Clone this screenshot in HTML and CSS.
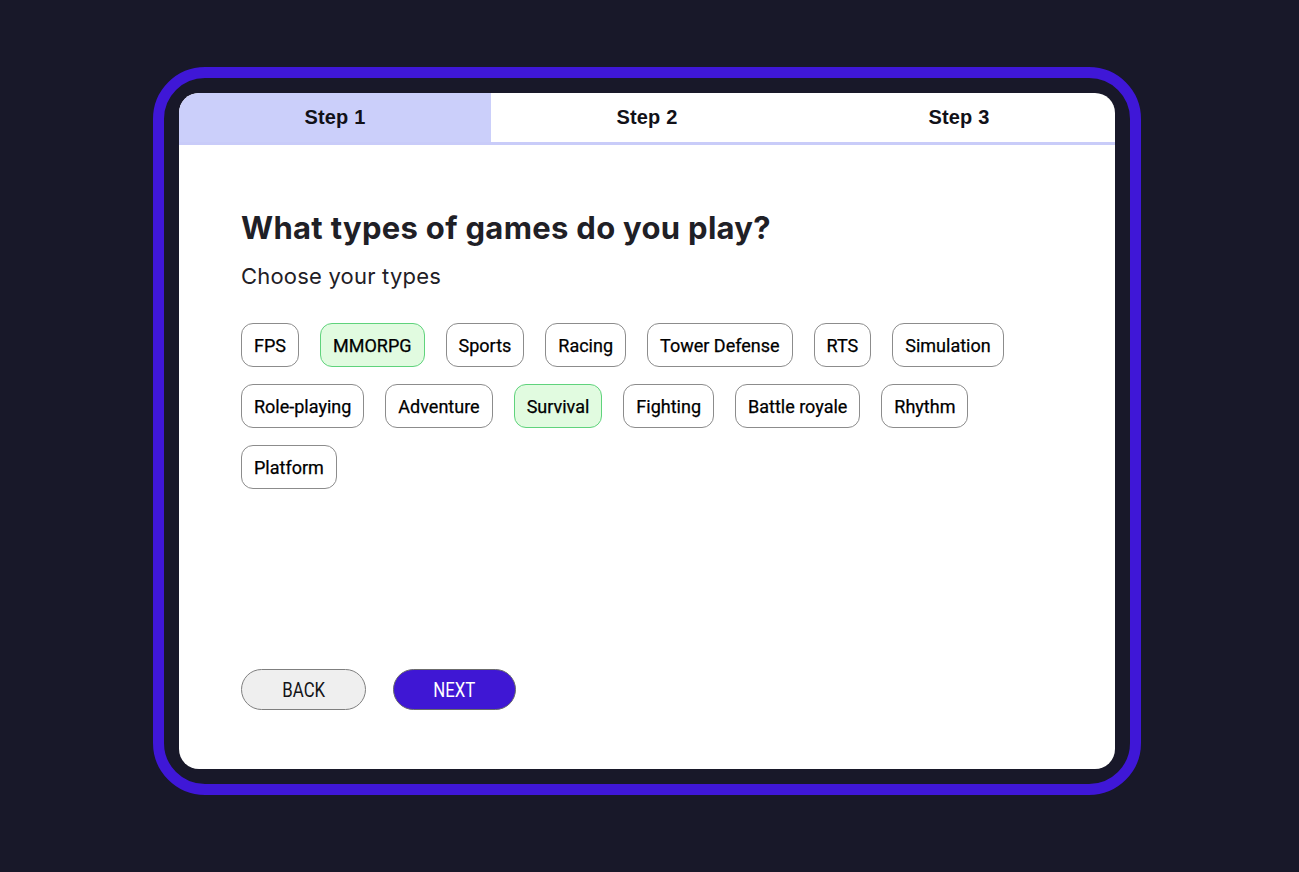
FILE: index.html
```html
<!DOCTYPE html>
<html lang="en">
<head>
<meta charset="utf-8">
<title>Game types</title>
<link rel="stylesheet" href="styles.css">
</head>
<body>
<div class="frame">
  <div class="card">
    <div class="tabs">
      <div class="tab active">Step 1</div>
      <div class="tab">Step 2</div>
      <div class="tab">Step 3</div>
    </div>
    <div class="content">
      <h1 class="title">What types of games do you play?</h1>
      <p class="subtitle">Choose your types</p>
      <div class="chips">
        <span class="chip">FPS</span>
        <span class="chip selected">MMORPG</span>
        <span class="chip">Sports</span>
        <span class="chip">Racing</span>
        <span class="chip">Tower Defense</span>
        <span class="chip">RTS</span>
        <span class="chip">Simulation</span>
        <span class="chip">Role-playing</span>
        <span class="chip">Adventure</span>
        <span class="chip selected">Survival</span>
        <span class="chip">Fighting</span>
        <span class="chip">Battle royale</span>
        <span class="chip">Rhythm</span>
        <span class="chip">Platform</span>
      </div>
      <div class="actions">
        <button class="btn back"><span class="btn-label">BACK</span></button>
        <button class="btn next"><span class="btn-label">NEXT</span></button>
      </div>
    </div>
  </div>
</div>
</body>
</html>
```
FILE: styles.css
```css
html, body {
  margin: 0;
  padding: 0;
  background: #181829;
}
body {
  height: 872px;
  overflow: hidden;
}
.frame {
  box-sizing: border-box;
  width: 988px;
  height: 728px;
  margin: 67px 0 0 153px;
  border: 11px solid #3f17d7;
  border-radius: 52px;
  padding: 15px;
  background: #181829;
}
.card {
  height: 100%;
  background: #ffffff;
  border-radius: 20px;
  overflow: hidden;
  display: flex;
  flex-direction: column;
}
.tabs {
  display: grid;
  grid-template-columns: repeat(3, 1fr);
  border-bottom: 3px solid #c9ccf9;
}
.tab {
  height: 49px;
  display: flex;
  align-items: center;
  justify-content: center;
  font-family: "Liberation Sans", Arial, sans-serif;
  font-weight: 700;
  font-size: 20px;
  letter-spacing: 0.2px;
  color: #111118;
}
.tab.active {
  background: #cbcffa;
}
.content {
  flex: 1;
  display: flex;
  flex-direction: column;
  padding: 65px 62px 59px;
}
.title {
  margin: 0;
  font-family: Inter, "Liberation Sans", sans-serif;
  font-weight: 700;
  font-size: 31px;
  line-height: 36px;
  letter-spacing: 0.3px;
  color: #1f2026;
}
.subtitle {
  margin: 16px 0 0;
  font-family: Inter, "Liberation Sans", sans-serif;
  font-size: 22px;
  line-height: 28px;
  letter-spacing: 0.2px;
  color: #1f2026;
}
.chips {
  display: flex;
  flex-wrap: wrap;
  gap: 17px 21px;
  margin-top: 33px;
}
.chip {
  box-sizing: border-box;
  height: 44px;
  display: inline-flex;
  align-items: center;
  padding: 0 12px;
  border: 1.5px solid #8c8c8c;
  border-radius: 12px;
  background: #ffffff;
  font-family: Roboto, "Liberation Sans", sans-serif;
  font-weight: 400;
  font-size: 18px;
  color: #000000;
  -webkit-text-stroke: 0.25px #000000;
}
.chip.selected {
  background: #e1fbe0;
  border-color: #5fd37c;
}
.actions {
  margin-top: auto;
  display: flex;
  gap: 27px;
}
.btn {
  box-sizing: border-box;
  height: 41px;
  border-radius: 21px;
  font-family: Roboto, "Liberation Sans", sans-serif;
  font-size: 21px;
  padding: 0;
  cursor: pointer;
  display: flex;
  align-items: center;
  justify-content: center;
}
.btn-label {
  display: inline-block;
  transform: scaleX(0.8);
}
.back {
  width: 125px;
  background: #efefef;
  border: 1px solid #7f7f7f;
  color: #141418;
}
.next {
  width: 123px;
  background: #3f17d4;
  border: 1px solid #6b6b6b;
  color: #ffffff;
}
```
